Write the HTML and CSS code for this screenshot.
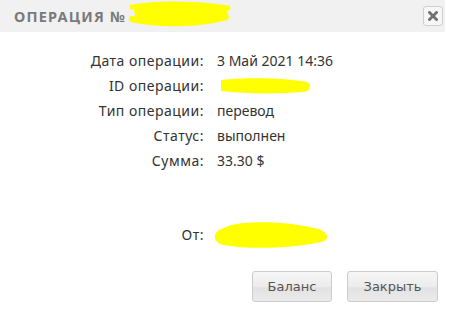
FILE: index.html
```html
<!DOCTYPE html>
<html>
<head>
<meta charset="utf-8">
<link rel="stylesheet" href="styles.css">
</head>
<body>
<div class="dialog">
  <div class="header">
    <span class="title">ОПЕРАЦИЯ №</span>
    <svg class="mark mark-title" width="104" height="26" viewBox="0 0 104 26"><path d="M6 8 C20 3 60 2 98 6 L100 14 C80 22 40 24 8 21 Z" fill="#ffff00"/><path d="M4 6 C30 2 70 2 100 7" stroke="#ffff00" stroke-width="5" fill="none" stroke-linecap="round"/><path d="M4 18 C30 24 70 24 98 16" stroke="#ffff00" stroke-width="6" fill="none" stroke-linecap="round"/></svg>
    <button class="close" type="button"><svg width="10" height="10" viewBox="0 0 10 10"><path d="M1.5 1.5 L8.5 8.5 M8.5 1.5 L1.5 8.5" stroke="#707070" stroke-width="2.8" stroke-linecap="square"/></svg></button>
  </div>
  <div class="body">
    <div class="grid">
      <div class="label">Дата операции:</div><div class="value">3 Май 2021 14:36</div>
      <div class="label">ID операции:</div><div class="value"><svg class="mark" width="96" height="20" viewBox="0 0 96 20"><path d="M4 4 C30 1 70 2 90 6 C96 10 92 16 86 16 C60 18 30 18 4 15 Z" fill="#ffff00"/></svg></div>
      <div class="label">Тип операции:</div><div class="value">перевод</div>
      <div class="label">Статус:</div><div class="value">выполнен</div>
      <div class="label">Сумма:</div><div class="value">33.30 $</div>
    </div>
    <div class="from">
      <div class="label">От:</div>
      <div class="value"><svg class="mark" width="118" height="30" viewBox="0 0 118 30"><path d="M18 5 C40 0 80 2 100 8 C116 10 118 20 108 22 C80 28 40 30 10 25 C0 22 0 14 6 10 Z" fill="#ffff00"/></svg></div>
    </div>
  </div>
  <div class="footer">
    <button class="btn" type="button">Баланс</button>
    <button class="btn" type="button">Закрыть</button>
  </div>
</div>
</body>
</html>
```
FILE: styles.css
```css
html, body {
  margin: 0;
  padding: 0;
  background: #fff;
}
body {
  width: 450px;
  height: 311px;
  overflow: hidden;
  font-family: "Noto Sans", "DejaVu Sans", sans-serif;
}
.dialog {
  width: 445px;
  display: flex;
  flex-direction: column;
}
.header {
  height: 32px;
  background: #f1f1f1;
  display: flex;
  align-items: center;
  padding-left: 14px;
  padding-right: 2px;
  box-sizing: border-box;
}
.title {
  font-family: "Noto Sans", sans-serif;
  font-weight: bold;
  font-size: 14.5px;
  letter-spacing: 1.2px;
  color: #7a7a7a;
}
.mark-title {
  margin-left: 2px;
  margin-top: -4px;
}
.close {
  margin-left: auto;
  width: 20px;
  height: 20px;
  padding: 0;
  border: 1px solid #cfcfcf;
  border-radius: 3px;
  background: #f7f7f7;
  display: flex;
  align-items: center;
  justify-content: center;
}
.body {
  padding-top: 16px;
}
.grid {
  display: grid;
  grid-template-columns: 204px 1fr;
  column-gap: 13px;
  row-gap: 0;
}
.label, .value {
  height: 25px;
  line-height: 25px;
  font-size: 14px;
  color: #333;
}
.label {
  text-align: right;
  letter-spacing: 0.5px;
}
.value {
  display: flex;
  align-items: center;
}
.from {
  display: grid;
  grid-template-columns: 204px 1fr;
  column-gap: 9px;
  margin-top: 47px;
}
.from .label, .from .value {
  height: 30px;
  line-height: 30px;
}
.footer {
  display: flex;
  justify-content: flex-end;
  gap: 15px;
  padding-right: 7px;
  margin-top: 21px;
}
.btn {
  height: 31px;
  padding: 0 14px;
  border: 1px solid #cccccc;
  border-radius: 3px;
  background: linear-gradient(#f6f6f6, #ececec 50%, #e2e2e2 55%, #ebebeb);
  font-family: "DejaVu Sans", sans-serif;
  font-size: 13px;
  color: #555;
}
.btn:first-child { width: 80px; }
.btn:last-child { width: 91px; }
```
